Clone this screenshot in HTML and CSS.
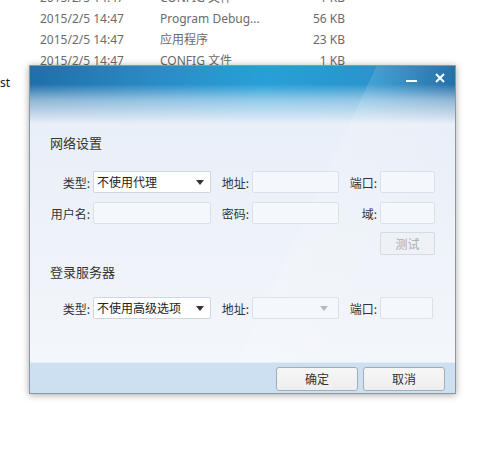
FILE: index.html
```html
<!DOCTYPE html>
<html lang="zh-CN">
<head>
    <meta charset="UTF-8">
    <title>网络设置</title>
    <link rel="stylesheet" href="styles.css">
</head>
<body>
    <div class="files">
        <div class="file-row"><span>2015/2/5 14:47</span><span>CONFIG 文件</span><span class="size">1 KB</span></div>
        <div class="file-row"><span>2015/2/5 14:47</span><span>Program Debug...</span><span class="size">56 KB</span></div>
        <div class="file-row"><span>2015/2/5 14:47</span><span>应用程序</span><span class="size">23 KB</span></div>
        <div class="file-row"><span>2015/2/5 14:47</span><span>CONFIG 文件</span><span class="size">1 KB</span></div>
    </div>
    <div class="side-text">st</div>

    <div class="dialog">
        <div class="titlebar">
            <span class="btn-min"></span>
            <span class="btn-close">
                <svg width="10" height="10" viewBox="0 0 10 10"><path d="M1 1L9 9M9 1L1 9" stroke="#fff" stroke-width="2"/></svg>
            </span>
        </div>
        <div class="content">
            <div class="section-title">网络设置</div>
            <div class="form-grid">
                <label>类型:</label>
                <div class="select"><span>不使用代理</span><i class="arrow"></i></div>
                <label>地址:</label>
                <div class="input"></div>
                <label>端口:</label>
                <div class="input"></div>

                <label>用户名:</label>
                <div class="input"></div>
                <label>密码:</label>
                <div class="input"></div>
                <label>域:</label>
                <div class="input"></div>

                <div class="test-btn">测试</div>
            </div>

            <div class="section-title second">登录服务器</div>
            <div class="form-grid">
                <label>类型:</label>
                <div class="select"><span>不使用高级选项</span><i class="arrow"></i></div>
                <label>地址:</label>
                <div class="input combo"><i class="arrow light"></i></div>
                <label>端口:</label>
                <div class="input short"></div>
            </div>
        </div>
        <div class="footer">
            <div class="btn">确定</div>
            <div class="btn">取消</div>
        </div>
    </div>
</body>
</html>
```

FILE: styles.css
```css
body{
    margin: 0;
    background: #fff;
    font-family: "Noto Sans", "Noto Sans CJK SC", sans-serif;
    position: relative;
    height: 460px;
    overflow: hidden;
}
.files{
    margin-top: -13px;
}
.file-row{
    display: grid;
    grid-template-columns: 120px 140px 45px;
    padding-left: 40px;
    height: 21px;
    line-height: 21px;
    font-size: 12px;
    color: #6b6b6b;
    white-space: nowrap;
}
.file-row .size{
    text-align: right;
}
.side-text{
    margin-top: 4px;
    font-size: 12px;
    color: #1a1a1a;
    line-height: 16px;
}

/* dialog window */
.dialog{
    position: absolute;
    left: 29px;
    top: 65px;
    width: 425px;
    height: 327px;
    border: 1px solid #8b97a4;
    box-shadow: 0 1px 7px rgba(0,0,0,.35);
    display: flex;
    flex-direction: column;
    font-family: "Noto Sans CJK SC", sans-serif;
    background:
        linear-gradient(115deg, rgba(255,255,255,0) 60%, rgba(255,255,255,.12) 60%, rgba(255,255,255,0) 80%),
        linear-gradient(to bottom, rgba(234,240,249,0) 0, rgba(234,240,249,0) 18px, rgba(234,240,249,.55) 34px, #e9eff8 58px, #edf2f9 150px, #f3f6fb 290px),
        linear-gradient(to right, #1f6fa9 0, #2a8cc6 30%, #27a0d7 55%, #2a94cd 80%, #1e6ba5 100%);
}
.titlebar{
    height: 44px;
    display: flex;
    justify-content: flex-end;
    align-items: flex-start;
    padding-right: 10px;
    box-sizing: border-box;
}
.btn-min{
    width: 11px;
    height: 2px;
    background: #fff;
    margin-top: 14px;
    margin-right: 18px;
}
.btn-close{
    margin-top: 7px;
    display: flex;
}
.content{
    flex: 1;
    padding: 25px 0 0 18px;
}
.section-title{
    font-size: 13px;
    line-height: 16px;
    color: #333;
    padding-left: 2px;
    margin-bottom: 20px;
}
.section-title.second{
    margin-top: 9px;
    margin-bottom: 17px;
}
.form-grid{
    display: grid;
    grid-template-columns: 45px 118px 41px 87px 41px 55px;
    grid-auto-rows: 22px;
    row-gap: 9px;
    align-items: center;
}
.form-grid label{
    font-size: 12px;
    color: #333;
    text-align: right;
    padding-right: 3px;
}
.input, .select{
    height: 22px;
    box-sizing: border-box;
    border: 1px solid #dbe1e9;
    border-radius: 2px;
    background: #f4f7fb;
    position: relative;
}
.input.short{
    width: 53px;
}
.select{
    background: #fff;
    border-color: #cfd6de;
    font-size: 12px;
    line-height: 20px;
    color: #222;
    padding-left: 3px;
}
.arrow{
    position: absolute;
    right: 6px;
    top: 8px;
    width: 0;
    height: 0;
    border-left: 4px solid transparent;
    border-right: 4px solid transparent;
    border-top: 5px solid #333;
}
.arrow.light{
    right: 10px;
    border-top-color: #b5b9be;
}
.test-btn{
    grid-column: 6;
    height: 23px;
    margin-top: -2px;
    box-sizing: border-box;
    border: 1px solid #d5dbe3;
    border-radius: 2px;
    background: #eef2f7;
    color: #acacac;
    font-size: 12px;
    line-height: 21px;
    text-align: center;
}
.footer{
    height: 31px;
    background: #cde0f1;
    border-top: 1px solid #e4eef7;
    box-sizing: border-box;
    display: flex;
    justify-content: flex-end;
    gap: 5px;
    padding: 4px 10px 0 0;
}
.btn{
    width: 82px;
    height: 24px;
    box-sizing: border-box;
    border: 1px solid #a3adb8;
    border-radius: 3px;
    background: linear-gradient(#f6f6f6, #eeeeee);
    font-size: 12px;
    line-height: 22px;
    text-align: center;
    color: #333;
}
```
